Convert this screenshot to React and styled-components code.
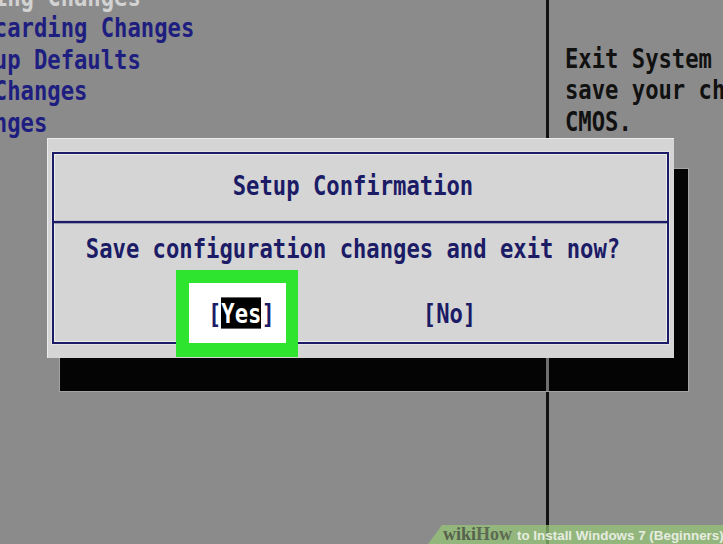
import React from "react";
import styled, { createGlobalStyle } from "styled-components";

const BIOS_FONT = `"DejaVu Sans Mono", "Liberation Mono", monospace`;
const NAVY = "#1b1b66";

const GlobalStyle = createGlobalStyle`
  html, body {
    margin: 0;
    padding: 0;
    background: #8b8b8b;
  }
  body {
    width: 723px;
    height: 544px;
    overflow: hidden;
  }
`;

const Screen = styled.div`
  position: relative;
  width: 723px;
  height: 544px;
  overflow: hidden;
  background: #8b8b8b;
  font-family: ${BIOS_FONT};
  font-weight: bold;
  font-size: 22.2px;
`;

const Columns = styled.div`
  display: grid;
  grid-template-columns: 546px 3px 1fr;
  height: 100%;
`;

// menu column is scrolled so its first 8 characters sit off screen
const MenuPanel = styled.div`
  margin: -18.5px 0 0 -113px;
`;

const HelpPanel = styled.div`
  padding: 43.5px 0 0 16px;
  color: #111;
`;

const Divider = styled.div`
  background: #121212;
`;

const Row = styled.div`
  height: 31.5px;
  line-height: 31.5px;
  white-space: pre;
  color: ${(p) => p.$tone || "#1e1e80"};
  transform: scaleY(1.2);
`;

const ModalLayer = styled.div`
  position: absolute;
  left: 47px;
  top: 138px;
  width: 627px;
  height: 220px;
`;

const DropShadow = styled.div`
  position: absolute;
  left: 13px;
  top: 31px;
  width: 628px;
  height: 222px;
  background: #040404;
  box-shadow: 0 0 0 1px #a3a3a3;

  /* screen divider showing through the shadow */
  &::after {
    content: "";
    position: absolute;
    left: 486px;
    top: 0;
    bottom: 0;
    width: 3px;
    background: #6e6e6e;
  }
`;

const Dialog = styled.div`
  position: relative;
  box-sizing: border-box;
  width: 100%;
  height: 100%;
  padding: 14px 5px;
  background: #d5d5d5;
  box-shadow: inset 1px 1px 0 #ececec;
`;

const Frame = styled.div`
  box-sizing: border-box;
  height: 192px;
  border: 2px solid ${NAVY};
  box-shadow: inset 0 0 0 1px #eeeeee, 0 0 0 1px #e4e4e4;
  color: ${NAVY};
`;

const TitleBar = styled.div`
  height: 61px;
  line-height: 63px;
  padding-right: 15px;
  border-bottom: 2px solid ${NAVY};
  text-align: center;
  white-space: pre;
  transform: scaleY(1.2);
`;

const Body = styled.div`
  padding-top: 15px;
`;

const Message = styled.div`
  line-height: 32px;
  padding-right: 15px;
  text-align: center;
  white-space: pre;
  transform: scaleY(1.2);
`;

const ButtonRow = styled.div`
  display: flex;
  gap: 148px;
  margin-top: 33px;
  padding-left: 154px;
  line-height: 32px;
`;

const Choice = styled.div`
  position: relative;
  isolation: isolate;
  white-space: pre;

  ${(p) =>
    p.$selected &&
    `
    &::before {
      content: "";
      position: absolute;
      inset: -27px -23px -28px -32px;
      z-index: -1;
      background: #ffffff;
      border-style: solid;
      border-color: #2fe42f;
      border-width: 13px 12px 14px 13px;
    }
  `}
`;

const Caps = styled.span`
  display: inline-block;
  transform: scaleY(1.2);
`;

const Mark = styled.span`
  background: #000;
  color: #fff;
`;

const Watermark = styled.div`
  position: absolute;
  right: 0;
  bottom: 0;
  width: 295px;
  height: 19px;
  display: flex;
  align-items: baseline;
  padding-left: 15px;
  box-sizing: border-box;
  background: rgba(150, 198, 118, 0.72);
  clip-path: polygon(14px 0, 100% 0, 100% 100%, 0 100%);
  line-height: 19px;
  white-space: pre;
`;

const Brand = styled.span`
  font-family: "Liberation Serif", "DejaVu Serif", serif;
  font-weight: bold;
  font-size: 18px;
  color: ${(p) => p.$tone};
`;

const Caption = styled.span`
  margin-left: 5px;
  font-family: "Liberation Sans", Arial, sans-serif;
  font-weight: bold;
  font-size: 13.4px;
  color: #e6ede0;
`;

const menuItems = [
  { label: "Exit Saving Changes", tone: "#d2d2d2" },
  { label: "Exit Discarding Changes" },
  { label: "Load Setup Defaults" },
  { label: "Discard Changes" },
  { label: "Save Changes" },
];

const helpLines = ["Exit System Setup and", "save your changes to", "CMOS."];

export default function App() {
  return (
    <>
      <GlobalStyle />
      <Screen>
        <Columns>
          <MenuPanel>
            {menuItems.map((item) => (
              <Row key={item.label} $tone={item.tone}>
                {item.label}
              </Row>
            ))}
          </MenuPanel>
          <Divider />
          <HelpPanel>
            {helpLines.map((line) => (
              <Row key={line} $tone="#111">
                {line}
              </Row>
            ))}
          </HelpPanel>
        </Columns>

        <ModalLayer>
          <DropShadow />
          <Dialog>
            <Frame>
              <TitleBar>Setup Confirmation</TitleBar>
              <Body>
                <Message>Save configuration changes and exit now?</Message>
                <ButtonRow>
                  <Choice $selected>
                    <Caps>
                      [<Mark>Yes</Mark>]
                    </Caps>
                  </Choice>
                  <Choice>
                    <Caps>[No]</Caps>
                  </Choice>
                </ButtonRow>
              </Body>
            </Frame>
          </Dialog>
        </ModalLayer>

        <Watermark>
          <Brand $tone="#56614d">wiki</Brand>
          <Brand $tone="#5d6a53">How</Brand>
          <Caption>to Install Windows 7 (Beginners)</Caption>
        </Watermark>
      </Screen>
    </>
  );
}
